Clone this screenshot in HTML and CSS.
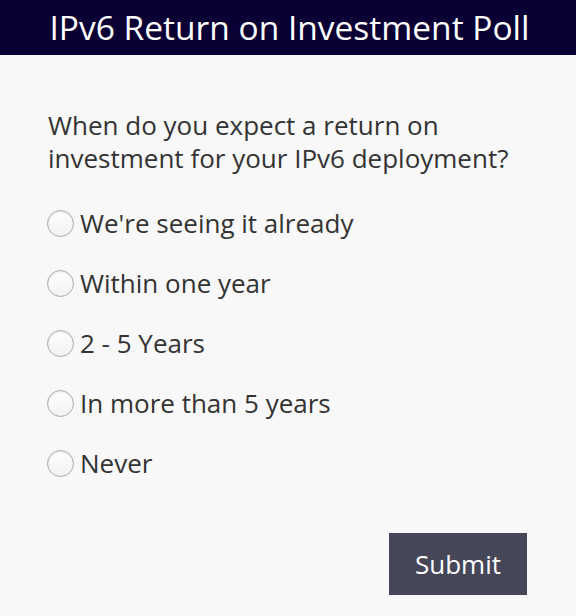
FILE: index.html
```html
<!DOCTYPE html>
<html lang="en">

<head>
    <meta charset="UTF-8">
    <meta name="viewport" content="width=device-width, initial-scale=1.0">
    <title>IPv6 Return on Investment Poll</title>
    <link rel="stylesheet" href="styles.css">
</head>

<body>
    <div class="header">IPv6 Return on Investment Poll</div>
    <form class="poll">
        <p class="question">When do you expect a return on investment for your IPv6 deployment?</p>
        <label class="option"><input type="radio" name="roi" value="already">We're seeing it already</label>
        <label class="option"><input type="radio" name="roi" value="year">Within one year</label>
        <label class="option"><input type="radio" name="roi" value="2-5">2 - 5 Years</label>
        <label class="option"><input type="radio" name="roi" value="5+">In more than 5 years</label>
        <label class="option"><input type="radio" name="roi" value="never">Never</label>
        <div class="actions">
            <button type="submit">Submit</button>
        </div>
    </form>
</body>

</html>
```

FILE: styles.css
```css
body {
    margin: 0;
    background-color: #f8f8f8;
    font-family: "Open Sans", sans-serif;
    color: #333;
}

.header {
    height: 55px;
    line-height: 55px;
    background-color: #0b0033;
    color: #fff;
    text-align: center;
    font-size: 33.5px;
    padding-left: 3px;
}

.poll {
    padding: 54px 49px 20px 47px;
}

.question {
    margin: 0 0 18px 1px;
    font-size: 26px;
    line-height: 33px;
}

.option {
    display: flex;
    align-items: center;
    height: 60px;
    font-size: 26px;
}

.option input {
    appearance: none;
    width: 27px;
    height: 27px;
    margin: 0 6px 0 0;
    border: 1px solid #aaa;
    border-radius: 50%;
    background: linear-gradient(#fff, #f2f2f2);
    box-shadow: inset 0 1px 2px rgba(0, 0, 0, 0.12);
}

.option input:checked {
    background: radial-gradient(circle, #464659 35%, #fff 40%);
}

.actions {
    display: flex;
    justify-content: flex-end;
    margin-top: 40px;
}

button {
    width: 138px;
    height: 62px;
    border: none;
    background-color: #464659;
    color: #fff;
    font-family: inherit;
    font-size: 26px;
    cursor: pointer;
}
```
